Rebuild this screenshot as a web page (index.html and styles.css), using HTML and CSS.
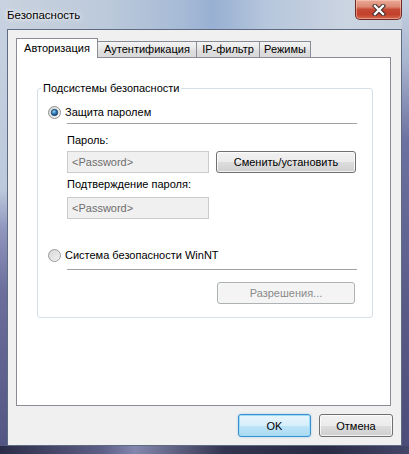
FILE: index.html
```html
<!DOCTYPE html>
<html lang="ru">
<head>
<meta charset="utf-8">
<title>Безопасность</title>
<link rel="stylesheet" href="styles.css">
</head>
<body>
<div class="window">
  <div class="titlebar">
    <span class="title">Безопасность</span>
    <div class="close">
      <svg width="14" height="12" viewBox="0 0 14 12">
        <path d="M3 2 L11 10 M11 2 L3 10" stroke="#3a2a2a" stroke-width="4.4" stroke-linecap="square" fill="none"/>
        <path d="M3 2 L11 10 M11 2 L3 10" stroke="#ffffff" stroke-width="2.4" stroke-linecap="square" fill="none"/>
      </svg>
    </div>
  </div>
  <div class="client">
    <div class="tabs">
      <div class="tab active w1">Авторизация</div>
      <div class="tab w2">Аутентификация</div>
      <div class="tab w3">IP-фильтр</div>
      <div class="tab w4">Режимы</div>
    </div>
    <div class="panel">
      <div class="group">
        <div class="group-title">Подсистемы безопасности</div>
        <div class="radio-row first">
          <svg class="radio" width="13" height="13" viewBox="0 0 13 13">
            <defs>
              <linearGradient id="rf" x1="0" y1="0" x2="1" y2="1">
                <stop offset="0" stop-color="#d4d4d4"/>
                <stop offset="1" stop-color="#fdfdfd"/>
              </linearGradient>
              <radialGradient id="dot" cx="0.4" cy="0.35" r="0.7">
                <stop offset="0" stop-color="#9fd6f3"/>
                <stop offset="0.5" stop-color="#2f7cb8"/>
                <stop offset="1" stop-color="#123d66"/>
              </radialGradient>
            </defs>
            <circle cx="6.5" cy="6.5" r="6" fill="url(#rf)" stroke="#8c8e90"/>
            <circle cx="6.5" cy="6.5" r="3.2" fill="url(#dot)" stroke="#19406a" stroke-width="0.8"/>
          </svg>
          <span>Защита паролем</span>
        </div>
        <div class="sep sep1"></div>
        <div class="sub">
          <div class="label l1">Пароль:</div>
          <div class="field-row">
            <div class="input">&lt;Password&gt;</div>
            <button class="btn wide">Сменить/установить</button>
          </div>
          <div class="label l2">Подтверждение пароля:</div>
          <div class="input i2">&lt;Password&gt;</div>
        </div>
        <div class="radio-row second">
          <svg class="radio" width="13" height="13" viewBox="0 0 13 13">
            <defs>
              <linearGradient id="rf2" x1="0" y1="0" x2="1" y2="1">
                <stop offset="0" stop-color="#cfcfcf"/>
                <stop offset="1" stop-color="#fafafa"/>
              </linearGradient>
            </defs>
            <circle cx="6.5" cy="6.5" r="6" fill="url(#rf2)" stroke="#9a9c9e"/>
            <circle cx="6.5" cy="6.5" r="4" fill="none" stroke="#e4e4e4" stroke-width="1"/>
          </svg>
          <span>Система безопасности WinNT</span>
        </div>
        <div class="sep sep2"></div>
        <button class="btn disabled perm" disabled>Разрешения...</button>
      </div>
    </div>
    <div class="footer">
      <button class="btn ok">OK</button>
      <button class="btn cancel">Отмена</button>
    </div>
  </div>
</div>
</body>
</html>
```
FILE: styles.css
```css
* { box-sizing: border-box; }
html, body { margin: 0; padding: 0; }
body {
  width: 409px;
  height: 454px;
  overflow: hidden;
  font-family: "Liberation Sans", Arial, sans-serif;
  font-size: 11px;
  color: #000;
  background: #30324f;
}
.window {
  width: 409px;
  height: 454px;
  display: flex;
  flex-direction: column;
  padding: 0 7px 8px 7px;
  background:
    linear-gradient(90deg, #2b2c48 0%, #5d5f86 25%, #8487ad 33%, #33344f 55%, #2a2b44 80%, #44466a 100%) bottom / 100% 8px no-repeat,
    linear-gradient(to bottom, #c4cfe0 0, #a9b6d0 60px, #6c72a0 140px, #5a5c88 300px, #4b4c78 100%) right / 7px 100% no-repeat,
    linear-gradient(to bottom, #c8d2e1 0, #bcc8dc 190px, #8f95bd 230px, #6c6f9c 290px, #525482 100%) left / 7px 100% no-repeat,
    linear-gradient(90deg, #c9d2de 0%, #bdcadb 25%, #a6bad6 45%, #98b0d3 52%, #b6c6dc 65%, #cbd4e1 85%, #c6d0dd 100%);
}
.titlebar {
  height: 29px;
  display: flex;
  justify-content: space-between;
  align-items: flex-start;
}
.title {
  margin-top: 8px;
  line-height: 14px;
  font-size: 11.5px;
  text-shadow: 0 0 6px rgba(255, 255, 255, 0.9), 0 0 3px rgba(255, 255, 255, 0.9);
}
.close {
  width: 47px;
  height: 20px;
  border: 1px solid #6e2b22;
  border-top: none;
  border-radius: 0 0 5px 5px;
  background: linear-gradient(to bottom, #e9a996 0%, #dc8a74 35%, #c64a35 50%, #c2402b 75%, #d5674f 100%);
  box-shadow: inset 0 0 0 1px rgba(255, 210, 200, 0.5);
  display: flex;
  align-items: center;
  justify-content: center;
}
.client {
  flex: 1;
  border: 1px solid #5d6b83;
  background: #f0f0f0;
  display: flex;
  flex-direction: column;
  padding: 8px 0 0 8px;
}
.tabs {
  display: flex;
  align-items: flex-end;
  height: 19px;
}
.tab {
  position: relative;
  height: 16px;
  border: 1px solid #898c95;
  border-bottom: none;
  margin-left: -1px;
  background: linear-gradient(to bottom, #f4f4f4, #e6e6e6 50%, #dedede 51%, #d9d9d9);
  line-height: 15px;
  text-align: center;
  white-space: nowrap;
}
.tab.active {
  height: 20px;
  margin-left: 0;
  margin-bottom: -1px;
  background: #fff;
  z-index: 1;
  line-height: 19px;
}
.w1 { width: 82px; }
.w2 { width: 100px; }
.w3 { width: 64px; }
.w4 { width: 52px; }
.panel {
  width: 375px;
  height: 349px;
  border: 1px solid #898c95;
  background: #fff;
  padding: 30px 0 0 20px;
}
.group {
  width: 336px;
  border: 1px solid #d5dfe5;
  border-radius: 3px;
  padding: 0 15px 13px 10px;
  display: flex;
  flex-direction: column;
  align-items: flex-start;
}
.group-title {
  margin: -8px 0 0 -7px;
  padding: 0 2px;
  background: #fff;
  line-height: 14px;
}
.radio-row {
  display: flex;
  align-items: center;
  height: 16px;
}
.radio-row.first { margin-top: 9px; }
.radio-row.second { margin-top: 28px; }
.radio { margin-right: 4px; flex: none; }
.sep {
  width: 290px;
  height: 1px;
  background: #a0a0a0;
  margin-left: 19px;
}
.sep1 { margin-top: 3px; }
.sep2 { margin-top: 6px; }
.sub {
  margin-left: 19px;
  display: flex;
  flex-direction: column;
  align-items: flex-start;
}
.label { line-height: 14px; }
.l1 { margin-top: 9px; }
.l2 { margin-top: 4px; }
.field-row {
  display: flex;
  gap: 7px;
  margin-top: 4px;
}
.input {
  width: 142px;
  height: 22px;
  border: 1px solid #c9cbce;
  background: #f0f0f0;
  color: #6d6d6d;
  line-height: 20px;
  padding-left: 4px;
}
.i2 { margin-top: 6px; }
.btn {
  font-family: inherit;
  font-size: 11px;
  color: #000;
  height: 22px;
  padding: 0;
  border: 1px solid #707070;
  border-radius: 3px;
  background: linear-gradient(to bottom, #f2f2f2 0%, #ebebeb 50%, #dddddd 51%, #cfcfcf 100%);
  box-shadow: inset 0 0 0 1px rgba(255, 255, 255, 0.75);
}
.btn.wide { width: 140px; }
.btn.disabled {
  width: 138px;
  margin-top: 12px;
  margin-left: 169px;
  border-color: #adb2b5;
  background: #f4f4f4;
  color: #8a8a8a;
  box-shadow: none;
}
.footer {
  display: flex;
  justify-content: flex-end;
  gap: 8px;
  padding-right: 8px;
  margin-top: 8px;
}
.footer .btn { height: 23px; }
.ok {
  width: 73px;
  border-color: #3c8fcd;
  background: linear-gradient(to bottom, #e8f5fc 0%, #d6eefb 50%, #bee4f8 51%, #abdaf3 100%);
  box-shadow: inset 0 0 0 1px #9fdcf8, 0 0 2px rgba(60, 170, 230, 0.5);
}
.cancel { width: 74px; }
```
